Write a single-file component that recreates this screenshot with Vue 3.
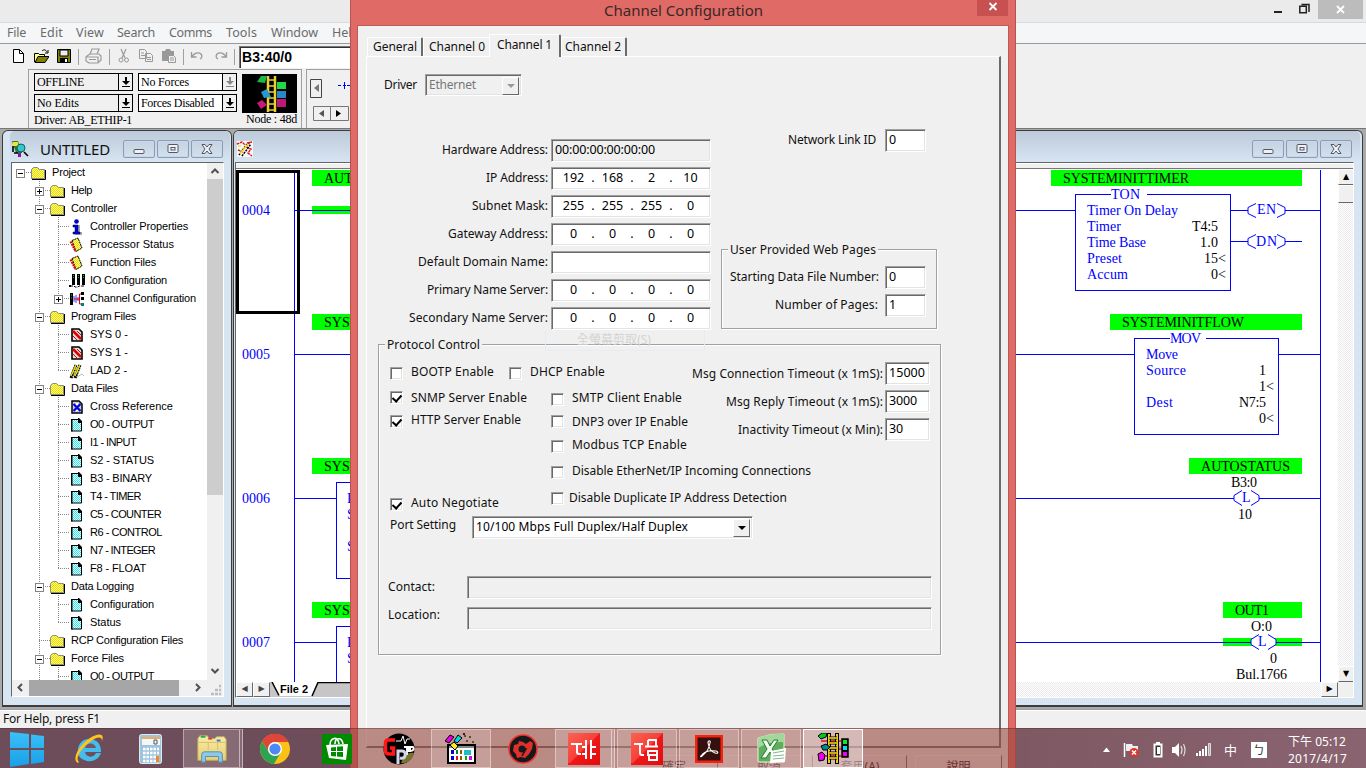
<script setup>
// Spreads a label over a given width through letter-spacing.
const vFit = {
  mounted(el, { value }) {
    const range = document.createRange()
    range.selectNodeContents(el)
    const width = range.getBoundingClientRect().width
    const count = [...el.textContent.trim()].length
    if (width > 0 && value) el.style.letterSpacing = ((value - width) / count).toFixed(3) + 'px'
  },
}

const menus = [
  ['File', 19, 33], ['Edit', 23, 36], ['View', 28, 41], ['Search', 38, 52],
  ['Comms', 43, 57], ['Tools', 31, 45], ['Window', 47, 61], ['Help', 27, 30],
]

const combos = [
  ['OFFLINE', 47, 'grey'], ['No Forces', 48, 'dim'], ['No Edits', 42, 'grey'], ['Forces Disabled', 73, ''],
]

const tree = [
  { d: 0, e: '-', i: 'folder-root', t: 'Project', w: 33 },
  { d: 1, e: '+', i: 'folder', t: 'Help', w: 21 },
  { d: 1, e: '-', i: 'folder', t: 'Controller', w: 46 },
  { d: 2, i: 'info', t: 'Controller Properties', w: 98 },
  { d: 2, i: 'book', t: 'Processor Status', w: 84 },
  { d: 2, i: 'book', t: 'Function Files', w: 66 },
  { d: 2, i: 'io', t: 'IO Configuration', w: 77 },
  { d: 2, e: '+', i: 'channel', t: 'Channel Configuration', w: 106, last: true },
  { d: 1, e: '-', i: 'folder', t: 'Program Files', w: 65 },
  { d: 2, i: 'sys', t: 'SYS 0 -', w: 38 },
  { d: 2, i: 'sys', t: 'SYS 1 -', w: 38 },
  { d: 2, i: 'lad', t: 'LAD 2 -', w: 37, last: true },
  { d: 1, e: '-', i: 'folder', t: 'Data Files', w: 47 },
  { d: 2, i: 'cross', t: 'Cross Reference', w: 83 },
  { d: 2, i: 'page', t: 'O0 - OUTPUT', w: 64 },
  { d: 2, i: 'page', t: 'I1 - INPUT', w: 46 },
  { d: 2, i: 'page', t: 'S2 - STATUS', w: 64 },
  { d: 2, i: 'page', t: 'B3 - BINARY', w: 62 },
  { d: 2, i: 'page', t: 'T4 - TIMER', w: 51 },
  { d: 2, i: 'page', t: 'C5 - COUNTER', w: 71 },
  { d: 2, i: 'page', t: 'R6 - CONTROL', w: 72 },
  { d: 2, i: 'page', t: 'N7 - INTEGER', w: 65 },
  { d: 2, i: 'page', t: 'F8 - FLOAT', w: 56, last: true },
  { d: 1, e: '-', i: 'folder', t: 'Data Logging', w: 63 },
  { d: 2, i: 'page', t: 'Configuration', w: 64 },
  { d: 2, i: 'page', t: 'Status', w: 31, last: true },
  { d: 1, i: 'folder', t: 'RCP Configuration Files', w: 112 },
  { d: 1, e: '-', i: 'folder', t: 'Force Files', w: 53 },
  { d: 2, i: 'page', t: 'O0 - OUTPUT', w: 64 },
]

const addresses = [
  { t: 'Hardware Address:', w: 106, v: '00:00:00:00:00:00', vw: 100, off: true },
  { t: 'IP Address:', w: 62, ip: [192, 168, 2, 10] },
  { t: 'Subnet Mask:', w: 76, ip: [255, 255, 255, 0] },
  { t: 'Gateway Address:', w: 100, ip: [0, 0, 0, 0] },
  { t: 'Default Domain Name:', w: 130, v: '' },
  { t: 'Primary Name Server:', w: 121, ip: [0, 0, 0, 0] },
  { t: 'Secondary Name Server:', w: 139, ip: [0, 0, 0, 0] },
]

const timeouts = [
  ['Msg Connection Timeout (x 1mS):', 191, '15000', 36],
  ['Msg Reply Timeout (x 1mS):', 157, '3000', 28],
  ['Inactivity Timeout (x Min):', 145, '30', 14],
]

const tasks = [
  ['windows', ''], ['ie', ''], ['calc', ''], ['explorer', 'open stack'], ['chrome', ''], ['store', ''],
  ['gp', ''], ['palette', 'open'], ['gear', ''], ['plc1', 'open stack'], ['plc2', 'open'],
  ['acrobat', 'open'], ['excel', 'open'], ['ladder', 'open focus'],
]
const windowGlyphs = ['min', 'max', 'x']
</script>

<template>
  <div class="screen">
    <svg class="sheet" width="0" height="0">
      <defs>
        <pattern id="yel" width="2" height="2" patternUnits="userSpaceOnUse"><rect width="2" height="2" fill="#ffff66" /><rect width="1" height="1" fill="#e6d820" /><rect x="1" y="1" width="1" height="1" fill="#e6d820" /></pattern>
        <pattern id="cya" width="2" height="2" patternUnits="userSpaceOnUse"><rect width="2" height="2" fill="#fff" /><rect width="1" height="1" fill="#20f0f4" /><rect x="1" y="1" width="1" height="1" fill="#20f0f4" /></pattern>
        <linearGradient id="winblue" x1="0" y1="0" x2="0" y2="1"><stop offset="0" stop-color="#3cc0f8" /><stop offset="1" stop-color="#18a0e8" /></linearGradient>
        <linearGradient id="redg" x1="0" y1="0" x2="1" y2="1"><stop offset="0" stop-color="#f85848" /><stop offset=".5" stop-color="#f01818" /><stop offset="1" stop-color="#e00c10" /></linearGradient>
        <linearGradient id="fold" x1="0" y1="0" x2="0" y2="1"><stop offset="0" stop-color="#f8eca8" /><stop offset="1" stop-color="#e8cf70" /></linearGradient>
      </defs>
      <symbol id="folder" viewBox="0 0 16 14"><path d="M.5 12.500v-9l2-2h4l2 2h5v9z" fill="url(#yel)" stroke="#909070" /><path d="M1 13.500h13.500V4" fill="none" stroke="#000" /></symbol>
      <symbol id="folder-root" viewBox="0 0 16 14"><path d="M.5 12.500v-9l2-2h4l2 2h5v9z" fill="url(#yel)" stroke="#888" /><path d="M1 13.500h13.500V4" fill="none" stroke="#000" /></symbol>
      <symbol id="info" viewBox="0 0 16 16"><path d="M6 6h4v7h2v3H5v-2h2V9H5z" fill="#aaa" transform="translate(1 0)" /><circle cx="7.500" cy="2.500" r="2.300" fill="#0000c8" /><path d="M4 6h5v7h2v2H4v-2h2V8H4z" fill="#0000d8" stroke="#000050" stroke-width=".5" /></symbol>
      <symbol id="book" viewBox="0 0 16 16"><path d="M3 3.500l6-2.500 4 10-6 3.500z" fill="url(#yel)" stroke="#000" stroke-dasharray="2 .6" /><path d="M1.500 4.500l5 10" stroke="#e00000" stroke-width="2" stroke-dasharray="2 .7" /></symbol>
      <symbol id="io" viewBox="0 0 16 16"><path d="M3 1h3v11H3zM8 1h3v11H8zM13 1h3v11h-3zM0 12h2v2H0z" fill="#000" /><path d="M4.500 2v3M9.500 2v3M14.500 2v3" stroke="#00d000" stroke-dasharray="1 1" /><path d="M1 13h4l1 1h3l1-1h5" fill="none" stroke="#000" stroke-dasharray="3 1" /></symbol>
      <symbol id="channel" viewBox="0 0 16 16"><rect x="1" y="2" width="3" height="12" fill="#000" /><path d="M2 4h1M2 7h1" stroke="#0e0" /><path d="M5 5v6M7 4v8M9 6v4" stroke="#00f" stroke-width=".8" /><path d="M5 8h6M10.500 3h2M10.500 3v10M10.500 13h2" stroke="#e00000" fill="none" /><rect x="12" y="1" width="3" height="3" /><rect x="12" y="6" width="3" height="3" /><rect x="12" y="12" width="3" height="3" fill="#008080" /></symbol>
      <symbol id="sys" viewBox="0 0 16 16"><path d="M3 2h7l3 3v9H3z" fill="#ddd" stroke="#000" stroke-width="1.600" /><path d="M4 4l8 8" stroke="#e00000" stroke-width="2.500" /><path d="M4 9l4 4M8 4l4 4" stroke="#e00000" /></symbol>
      <symbol id="lad" viewBox="0 0 16 16"><path d="M2 15L7 2M6 15L11 2" stroke="#000" stroke-width="3" stroke-dasharray="2 .4" /><path d="M2 13L7 2M6 13L11 2M4 9h6M5 6h5" stroke="#f0e000" stroke-width="1.200" /><path d="M8 14l5-3 2 2" stroke="#bbb" fill="none" /></symbol>
      <symbol id="cross" viewBox="0 0 16 16"><path d="M3 2h7l3 3v9H3z" fill="#ccd" stroke="#000" stroke-width="1.500" /><path d="M4.500 5l7 7M11.500 5l-7 7" stroke="#0000e0" stroke-width="2.200" /><path d="M7 4h2v2H7zM7 11h2v1H7z" fill="#fff" /></symbol>
      <symbol id="page" viewBox="0 0 16 16"><path d="M2.500 2.500h7l3 3v8.500h-10z" fill="url(#cya)" stroke="#000" /><path d="M2 2h1.500v12.500H2zM9 1h1l3 3v2H9z" /></symbol>

      <symbol id="t-new" viewBox="0 0 16 16"><path d="M3.500 1.500h6l4 4v9h-10z" fill="#fff" stroke="#000" /><path d="M9.500 1.500v4h4" fill="none" stroke="#000" /></symbol>
      <symbol id="t-open" viewBox="0 0 16 16"><path d="M1.500 14V5.500h4l1 1h5V9" fill="#ff8" stroke="#000" /><path d="M2 14.500l3-6h11l-4 6z" fill="#808000" stroke="#000" /><path d="M9 3c2-2 4-1 5 1m1-2v3h-3" fill="none" stroke="#000" /></symbol>
      <symbol id="t-save" viewBox="0 0 16 16"><path d="M1.500 1.500h13v13h-13z" fill="#808000" stroke="#000" /><path d="M4 2h8v6H4z" fill="#ececec" stroke="#000" /><path d="M4 10h8v5H4z" /><path d="M9 11h2v3H9z" fill="#fff" /></symbol>
      <symbol id="t-print" viewBox="0 0 18 16"><path d="M5 6l2-5h7l-2 5M2 8l3-2h9l2 2v4l-3 3H4l-3-2V9zM2 9h11v5M4 11.500h7" fill="none" stroke="#999" stroke-width="1.200" /></symbol>
      <symbol id="t-cut" viewBox="0 0 12 16"><path d="M3 1l4 9M8 1L4 10" stroke="#999" stroke-width="1.200" /><circle cx="3" cy="12" r="2" fill="none" stroke="#999" /><circle cx="8.500" cy="12" r="2" fill="none" stroke="#999" /></symbol>
      <symbol id="t-copy" viewBox="0 0 16 16"><path d="M1.500 1.500h5l2 2v7h-7zM7.500 5.500h5l2 2v6h-7zM3 5h3M3 7.500h4M9 9.500h4M9 11.500h4" fill="none" stroke="#999" /></symbol>
      <symbol id="t-paste" viewBox="0 0 16 16"><path d="M1 3h3l1-2h4l1 2h3v10H1z" fill="#999" /><path d="M7.500 7.500h5l2 2v5h-7z" fill="#eee" stroke="#999" /><path d="M9 10h4M9 12h4" stroke="#999" /></symbol>
      <symbol id="t-undo" viewBox="0 0 14 12"><path d="M1.500 2v5h5M2 6.500c2-3 6-5 9-2.500 1.500 2 1 4-1 5" fill="none" stroke="#999" stroke-width="1.300" /></symbol>

      <symbol id="ladder" viewBox="0 0 32 32"><path d="M4 8h20M8 16h18M7 23h17" stroke="#e81010" stroke-width="1.500" /><path d="M12 0v31M20 0v31" stroke="#000" stroke-width="4" /><path d="M12 1v29M20 1v29" stroke="#ffe818" stroke-width="1.800" /><path d="M12 5h8M12 10h8M12 15h8M12 20h8M12 25h8" stroke="#000" stroke-width="3" /><path d="M12 5h8M12 10h8M12 15h8M12 20h8M12 25h8" stroke="#ffe818" stroke-width="1.400" /><path d="M1 3l4-3h5l-1 4-5 2z" fill="#00c820" stroke="#000" /><path d="M4 13l5-2 4 3-3 3H6z" fill="#008890" stroke="#000" /><path d="M1 21l4-2 3 3-1 5-5 1z" fill="#f000f0" stroke="#000" /><path d="M25 6h6v18h-6z" stroke="#000" stroke-width="1.500" /><path d="M26 7h4v4h-4z" fill="#00f020" /><path d="M26 13h4v4h-4z" fill="#00e0f0" /><path d="M26 19h4v4h-4z" fill="#f000f0" /></symbol>
      <symbol id="app" viewBox="0 0 15 16"><path d="M3 4h9M2 9h11M3 13h9" stroke="#e00000" stroke-width="1.500" /><path d="M5.500 0v16M10.500 0v16" stroke="#000" stroke-width="3" stroke-dasharray="1.500 .6" /><path d="M5.500 1v14M10.500 1v14M6 4h4M6 8h4M6 12h4" stroke="#ffe800" stroke-width="1.400" /><path d="M0 3h3v3H0zM12 3h3v3h-3z" fill="#00f020" /><path d="M2 7h3v4H2zM12 8h3v3h-3z" fill="#0020ff" /><path d="M0 12h3v3H0zM12 12h3v3h-3z" fill="#800080" /></symbol>
      <symbol id="windows" viewBox="0 0 34 36"><path d="M0 1l19 2v14H0zM21 3.500L34 5v12H21zM0 19h19v14L0 36zM21 19h13v12l-13 2z" fill="url(#winblue)" /></symbol>
      <symbol id="ie" viewBox="0 0 32 32"><path d="M28 20c-2 6-8 9-14 8C6 26 4 21 5 16 6 9 12 5 19 6c7 2 9 7 9 13H12c1 6 9 6 11 1z" fill="#45bdec" /><path d="M12 15c1-6 10-6 11 0z" fill="#785560" /><path d="M5 30C-2 27 6 12 17 5 25 0 32 0 29 8c0-6-7-3-12 1C7 16 2 26 6 29z" fill="#ffc51d" /></symbol>
      <symbol id="calc" viewBox="0 0 32 32"><rect x="4.500" y="1.500" width="22" height="29" rx="2" fill="#9fc5dd" stroke="#dceaf2" /><rect x="7" y="4" width="18" height="8" fill="#f2f7fa" /><path d="M7 4h18v2H7z" fill="#f0aa62" /><path d="M19 7h3v4h-3z" fill="none" stroke="#556" /><path d="M8 16h16M8 20h16M8 24h16M8 28h16" stroke="#fff" stroke-width="2.500" stroke-dasharray="2.500 1" /><path d="M21 23h3v6h-3z" fill="#f0872b" /></symbol>
      <symbol id="explorer" viewBox="0 0 34 32"><path d="M2 5l2-3h8l2 3h6l2-2h8l2 3v22H2z" fill="url(#fold)" stroke="#c8ad58" /><path d="M5 2h5v2H5z" fill="#18b050" /><path d="M13 4h4v2h-4z" fill="#e04030" /><path d="M22 6h4v2h-4z" fill="#2878d8" /><path d="M3 9h28M13 9v8M23 9v8" stroke="#d5bd6c" /><path d="M6 30V22q0-3 3-3h16q3 0 3 3v8h-4v-6H10v6z" fill="#8dc8e8" stroke="#508eb4" /></symbol>
      <symbol id="chrome" viewBox="0 0 32 32"><circle cx="16" cy="16" r="15" fill="#fbc116" /><path d="M3 8.500A15 15 0 0 1 29.500 9H16a7 7 0 0 0-6.600 9z" fill="#e0453a" /><path d="M3 8.500A15 15 0 0 0 15 31l7-12a7 7 0 0 1-12.600-1z" fill="#30a352" /><circle cx="16" cy="16" r="7" fill="#fff" /><circle cx="16" cy="16" r="5.600" fill="#4b8af4" /></symbol>
      <symbol id="store" viewBox="0 0 32 32"><path d="M1 1h30v30H1z" fill="#008a00" /><path d="M5 12l22-1-2 16-17-2z" fill="#fff" /><path d="M9 12c0-7 8-10 9-1M14 11c0-7 7-7 8 0" fill="none" stroke="#fff" stroke-width="1.600" /><path d="M10 14.500l5-.5v4h-5zM16 13.800l6-.5V18h-6zM10 19h5v4.500l-5-.5zM16 19h6v5l-6-.5z" fill="#008a00" /></symbol>
      <symbol id="gp" viewBox="0 0 32 32"><circle cx="16" cy="16" r="15.500" /><path d="M18 30c3-9 8-11 13-10-1 6-6 11-13 10z" fill="#77752c" /><path d="M13 8h5l2-5 2 8 2-5h3" stroke="#fff" fill="none" /><path d="M21 14h9q2 3-2 4h-4v4M23 16h5" fill="none" stroke="#fff" stroke-width="1.800" /><path d="M12 7H5Q2.500 7 2.500 10v8q0 3 4 3h4v-6H7" fill="none" stroke="#ff1818" stroke-width="3.500" /><path d="M15 31V18h4q4 0 3 5-1 3-5 2" fill="none" stroke="#d4d4e8" stroke-width="3" /></symbol>
      <symbol id="palette" viewBox="0 0 32 32"><path d="M3 12h27v18H3z" fill="#fff" stroke="#000" stroke-width="2" /><path d="M4 13h25v2H4z" fill="#888" /><path d="M6 17h3v4H6zM6 23h3v4H6z" fill="#0000d8" /><path d="M11 17h2v4h-2z" fill="#008040" /><path d="M15 17h2v4h-2zM15 23h2v4h-2z" fill="#806000" /><path d="M11 23h2v4h-2z" fill="#e01010" /><path d="M19 17h7v5h-7z" fill="#18c0c8" /><path d="M20 23h2v4h-2z" fill="#00b000" /><path d="M24 23h3v4h-3z" fill="#e000e0" /><path d="M0 8l5-6 4 2-5 6z" fill="#e800e8" stroke="#000" /><path d="M9 8l4-6 4 3-5 5z" fill="#00d8e0" stroke="#000" /><path d="M5 12l4-3 4 4-3 4z" fill="#ffe828" stroke="#000" /><path d="M19 3h2M24 4h2M21 8h2M27 9h2M18 1h2" stroke="#222" stroke-width="2" /><path d="M19.500 3h1M24.500 4h1M21.500 8h1M27.500 9h1" stroke="#ffe828" /></symbol>
      <symbol id="gear" viewBox="0 0 32 32"><circle cx="16" cy="16" r="14" fill="#15191b" stroke="#f0302a" stroke-width="1.600" /><path d="M7 12l4-1 1-3 4 1 3 2 4-3 3 2-1 6-3 5-4 4-4-1-4 1-1-4-3-3z" fill="#e0302c" /><circle cx="15" cy="16" r="3.500" fill="#15191b" /><path d="M15 16h4l-4 7" stroke="#15191b" stroke-width="1.500" fill="none" /></symbol>
      <symbol id="plc1" viewBox="0 0 32 32"><path d="M0 0h32v32H0z" fill="url(#redg)" /><path d="M0 0h32L2 30H0z" fill="#ff7060" opacity=".45" /><path d="M3 11h11M9 11v8q0 2 2 2h2M18 7v19M23 7v19M14 14h4M14 21h4M23 14h5M23 21h5" fill="none" stroke="#fff" stroke-width="2" /></symbol>
      <symbol id="plc2" viewBox="0 0 32 32"><path d="M0 0h32v32H0z" fill="url(#redg)" /><path d="M0 0h32L2 30H0z" fill="#ff7060" opacity=".45" /><path d="M3 11h9M9 11v9q0 2 2 2h2M17 7h8v6M17 7v6M14 13.500h13M17 18h9v4h-9zM18 22v5h8v-5" fill="none" stroke="#fff" stroke-width="1.900" /></symbol>
      <symbol id="acrobat" viewBox="0 0 32 32"><path d="M2 2h28v28H2z" fill="#fa2010" /><path d="M4.500 4.500h23v23h-23z" fill="#35100e" /><path d="M8 23c2-3 7-6 15-5 3 1 2 3-1 2-4-1-6-5-7-10 0-3 3-3 2 0-1 5-4 10-7 12-2 2-3 2-2 1z" fill="none" stroke="#fff" stroke-width="1.100" /></symbol>
      <symbol id="excel" viewBox="0 0 32 32"><path d="M3 5q12-5 26-4v28H3z" fill="#5fae5a" stroke="#e4f4e0" /><path d="M3 5q12-5 26-4v8Q14 8 3 15z" fill="#a4d79a" /><path d="M7 7h5l3 6 4-6h4l-6 9 6 9h-5l-3-6-4 6H6l6-9z" fill="#f2fcec" stroke="#227a35" /><path d="M16 18l15-3-1 14-15 1z" fill="#fff" /><path d="M18 20l11-2M18 23l11-1M18 26l11-1" stroke="#85b890" /></symbol>
    </svg>

    <div class="desktop">
      <header class="title">
        <svg class="app-icon"><use href="#app" /></svg>
        <span class="spacer" />
        <svg class="caption" width="98" height="19"><path d="M9 12h8" stroke="#222" stroke-width="2" /><path d="M34.800 6.300h6.500v6.500h-6.500zM36.500 4.500h7.500v7.500" fill="none" stroke="#222" stroke-width="1.500" /><path d="M53 0h45v19H53z" fill="#bcbcbc" /><path d="M72 6l7 7M79 6l-7 7" stroke="#fff" stroke-width="1.800" /></svg>
      </header>
      <nav class="menubar">
        <span v-for="m in menus" :key="m[0]" class="menu" :style="{ width: m[2] + 'px' }"><span v-fit="m[1]">{{ m[0] }}</span></span>
      </nav>
      <div class="toolbar">
        <svg width="16" height="16"><use href="#t-new" /></svg>
        <svg width="16" height="16"><use href="#t-open" /></svg>
        <svg width="16" height="16"><use href="#t-save" /></svg>
        <i class="sep" />
        <svg width="18" height="16"><use href="#t-print" /></svg>
        <i class="sep" />
        <svg class="cut" width="12" height="16"><use href="#t-cut" /></svg>
        <svg width="16" height="16"><use href="#t-copy" /></svg>
        <svg width="16" height="16"><use href="#t-paste" /></svg>
        <i class="sep" />
        <svg class="undo" width="14" height="12"><use href="#t-undo" /></svg>
        <svg class="redo" width="14" height="12"><use href="#t-undo" /></svg>
        <i class="sep" />
        <b class="address"><span v-fit="50">B3:40/0</span></b>
      </div>
      <div class="panels">
        <section class="online">
          <div class="combos">
            <div v-for="c in combos" :key="c[0]" class="combo" :class="c[2]">
              <span v-fit="c[1]">{{ c[0] }}</span>
              <svg width="14" height="16"><path d="M6 3h2v4h3L7 11 3 7h3zM3 12h8v1H3z" /></svg>
            </div>
            <span class="driver"><span v-fit="98">Driver: AB_ETHIP-1</span></span>
          </div>
          <div class="node">
            <svg width="55" height="39" viewBox="0 0 55 39"><path d="M0 0h55v39H0z" /><path d="M26 2v36M33 2v36" stroke="#e8d030" stroke-width="2.500" /><path d="M26 6h7M26 12h7M26 18h7M26 24h7M26 30h7M26 36h7" stroke="#e8d030" stroke-width="1.500" /><path d="M15 8l4-6h6l-2 7z" fill="#18b848" /><path d="M19 18l6-3 4 8-7 1z" fill="#2898d0" /><path d="M15 29l5-3 5 5-6 4z" fill="#c81878" /><path d="M35 8h9v7h-9z" fill="#20d848" /><path d="M35 17h9v7h-9z" fill="#2888c8" /><path d="M35 25h9v8h-9z" fill="#c01878" /></svg>
            <span v-fit="51">Node : 48d</span>
          </div>
        </section>
        <section class="instr">
          <svg width="44" height="58"><path d="M2.500 10.500h11v18h-11z" fill="#f0f0f0" stroke="#444" /><path d="M11 15v8l-5-4z" fill="#777" /><path d="M30 16.500h4M35 16.500h9M36.500 13v7" stroke="#00f" stroke-dasharray="3 1" /><path d="M5.500 37.500h35v14h-35zM22.500 38v14" fill="#f0f0f0" stroke="#777" /><path d="M16 41v7l-5-3.500z" fill="#555" /><path d="M28 41v7l5-3.500z" /></svg>
        </section>
      </div>

      <div class="mdi">
        <section class="child tree-win">
          <header>
            <svg width="18" height="18" viewBox="0 0 18 18"><path d="M1 1h6l1 3h3v9H5z" fill="#228038" /><path d="M2 2h5v4H2z" fill="#ffe020" /><circle cx="10" cy="8" r="4" fill="#30c8c8" stroke="#146060" /><path d="M2 6v6M3 13h4M13 12l4 4" stroke="#000" stroke-width="1.600" /><path d="M7 13h3v4H7z" fill="#9010a0" /></svg>
            <span class="doc-name"><span v-fit="70">UNTITLED</span></span>
            <span class="spacer" />
            <span v-for="g in windowGlyphs" :key="g" class="winbtn">
              <svg width="14" height="12"><rect v-if="g === 'min'" x="2" y="6.500" width="10" height="4" rx="1" class="wg" /><template v-else-if="g === 'max'"><rect x="2" y="1.500" width="10" height="8" rx="1" class="wg" /><rect x="5" y="4.500" width="4" height="2.500" class="wg" /></template><path v-else d="M2 1.500h3l2 2.500 2-2.500h3L9 6l3 4.500H9L7 8l-2 2.500H2L5 6z" class="wg" /></svg>
            </span>
          </header>
          <div class="tree-client">
            <div class="tree-main">
              <ul class="tree">
                <li v-for="(n, k) in tree" :key="k" :class="['d' + n.d, { last: n.last }]">
                  <i v-if="n.d === 2" class="trunk" />
                  <i class="branch"><i v-if="n.e" class="exp" :class="{ plus: n.e === '+' }" /></i>
                  <svg width="16" height="16"><use :href="'#' + n.i" /></svg>
                  <span v-fit="n.w">{{ n.t }}</span>
                </li>
              </ul>
              <div class="vbar">
                <svg width="16" height="16"><path d="M4.500 10L8 6.500 11.500 10" class="chev" /></svg>
                <i />
                <span class="spacer" />
                <svg width="16" height="16"><path d="M4.500 5L8 8.500 11.500 5" class="chev" /></svg>
              </div>
            </div>
            <div class="hbar">
              <svg width="17" height="16"><path d="M10 4L6.500 7.500 10 11" class="chev" /></svg>
              <i />
              <span class="spacer" />
              <svg width="16" height="16"><path d="M6 4l3.500 3.500L6 11" class="chev" /></svg>
              <svg width="17" height="16"><path d="M13 6h2M9 10h6M5 14h10" stroke="#bbb" stroke-width="2.500" stroke-dasharray="3 1" /></svg>
            </div>
          </div>
        </section>

        <section class="child ladder-win">
          <header>
            <svg width="18" height="18" viewBox="0 0 18 18"><path d="M1 1h16v16H1z" fill="#fff" opacity=".8" /><path d="M1 4l5-2 3 3M11 3l5-1M14 2l-4 5 5 2-3 4 4 3M2 10l5 2" fill="none" stroke="#e01010" stroke-width="1.400" stroke-dasharray="2.500 .8" /><path d="M3 15l8-11M6 16l9-12" stroke="#000" stroke-width="1.500" stroke-dasharray="2 1" /><path d="M4 14l8-10M2 6h3" stroke="#ffe020" stroke-width="1.500" /></svg>
            <span class="spacer" />
            <span v-for="g in windowGlyphs" :key="g" class="winbtn">
              <svg width="14" height="12"><rect v-if="g === 'min'" x="2" y="6.500" width="10" height="4" rx="1" class="wg" /><template v-else-if="g === 'max'"><rect x="2" y="1.500" width="10" height="8" rx="1" class="wg" /><rect x="5" y="4.500" width="4" height="2.500" class="wg" /></template><path v-else d="M2 1.500h3l2 2.500 2-2.500h3L9 6l3 4.500H9L7 8l-2 2.500H2L5 6z" class="wg" /></svg>
            </span>
          </header>
          <div class="ladder-client">
            <div class="splitter" />
            <div class="rungs">
              <svg class="canvas" width="1102" height="513" viewBox="236 169 1102 513">
                <g fill="#00ff00"><path d="M312 170h60v16h-60zM312 206h60v8h-60zM312 314h60v16h-60zM312 458h60v16h-60zM312 602h60v16h-60zM1051 170h251v16h-251zM1110 314h192v16h-192zM1189 458h113v16h-113zM1223 602h79v16h-79zM1223 638h79v8h-79z" /></g>
                <path class="wire" d="M294.500 170v512M1320.500 170v512M294 210.500h781M294 354.500h840M294 498.500h42M294 642.500h42M1000 498.500h234M1000 642.500h251M1231 210.500h17M1285 210.500h35M1231 241.500h17M1285 241.500h17M1279 354.500h41M1259 498.500h61M1276 642.500h44" />
                <path class="wire" d="M1111 194.500h-35.500v96h155v-96H1147M1170 338.500h-35.500v96h144v-96H1206M360 482.500h-23.500v95.500h24M360 626.500h-23.500v60" />
                <path d="M1259 634.500l-8 5v5l8 5h9l8-5v-5l-8-5z" fill="#fff" />
                <g class="coil"><path d="M1256 203.500l-8 4v6l8 4M1277 203.500l8 4v6l-8 4M1256 234.500l-8 4v6l8 4M1277 234.500l8 4v6l-8 4" /><path d="M1242 490.500l-8 5v5l8 5M1251 490.500l8 5v5l-8 5" /><path d="M1259 634.500l-8 5v5l8 5M1268 634.500l8 5v5l-8 5" /></g>
                <rect x="237.500" y="171.500" width="61" height="141" fill="none" stroke="#000" stroke-width="3" />
                <g class="blue">
                  <text x="242" y="215" textLength="28">0004</text><text x="242" y="359" textLength="28">0005</text><text x="242" y="503" textLength="28">0006</text><text x="242" y="647" textLength="28">0007</text>
                  <text x="347" y="503">E</text><text x="347" y="519">S</text><text x="347" y="551">S</text><text x="347" y="647">E</text><text x="347" y="663">S</text>
                  <text x="1111" y="199" textLength="29">TON</text><text x="1087" y="215" textLength="91">Timer On Delay</text><text x="1087" y="231" textLength="34">Timer</text><text x="1087" y="247" textLength="59">Time Base</text><text x="1087" y="263" textLength="35">Preset</text><text x="1087" y="279" textLength="41">Accum</text>
                  <text x="1257" y="214" textLength="19">EN</text><text x="1256" y="246" textLength="21">DN</text><text x="1242" y="502">L</text><text x="1258" y="646">L</text>
                  <text x="1170" y="343" textLength="31">MOV</text><text x="1146" y="359" textLength="32">Move</text><text x="1146" y="375" textLength="40">Source</text><text x="1146" y="407" textLength="27">Dest</text>
                </g>
                <g class="ink">
                  <text x="324" y="183">AUTO</text><text x="324" y="327">SYST</text><text x="324" y="471">SYST</text><text x="324" y="615">SYST</text>
                  <text x="1063" y="183" textLength="126">SYSTEMINITTIMER</text><text x="1122" y="327" textLength="122">SYSTEMINITFLOW</text><text x="1201" y="471" textLength="89">AUTOSTATUS</text><text x="1235" y="615" textLength="34">OUT1</text>
                  <text x="1192" y="231" textLength="26">T4:5</text><text x="1200" y="247" textLength="18">1.0</text><text x="1204" y="263" textLength="22">15&lt;</text><text x="1211" y="279" textLength="15">0&lt;</text>
                  <text x="1259" y="375">1</text><text x="1259" y="391" textLength="15">1&lt;</text><text x="1239" y="407" textLength="27">N7:5</text><text x="1259" y="423" textLength="15">0&lt;</text>
                  <text x="1231" y="487" textLength="26">B3:0</text><text x="1238" y="519" textLength="14">10</text><text x="1251" y="631" textLength="21">O:0</text><text x="1270" y="663">0</text><text x="1236" y="679" textLength="51">Bul.1766</text>
                </g>
              </svg>
              <div class="classic-v"><span class="cbtn">▲</span><span class="cbtn thumb" /><span class="spacer" /><span class="cbtn">▼</span></div>
            </div>
            <div class="sheetbar">
              <span class="cbtn side">◀</span><span class="cbtn side">▶</span>
              <svg width="80" height="15"><path d="M0 0h80v15H0z" fill="#c6c6c6" /><path d="M2 0l7 14h33l6-14z" fill="#fff" /><path d="M2 0l7 13.500M42 14l6-13.500h32" fill="none" stroke="#000" stroke-width="1.500" /><text x="10" y="11" textLength="28" class="sheet-name">File 2</text></svg>
              <span class="track" />
              <span class="cbtn side black">▶</span><span class="cornerbox" />
            </div>
          </div>
        </section>
      </div>
      <footer class="status"><span v-fit="97">For Help, press F1</span></footer>
      <div class="wallpaper" />
    </div>

    <section class="dialog">
      <header class="dlg-title"><span class="dlg-name"><span v-fit="159">Channel Configuration</span></span><span class="dlg-close"><svg width="31" height="16"><path d="M12.500 3l7 7M19.500 3l-7 7" stroke="#fff" stroke-width="1.800" /></svg></span></header>
      <div class="dlg-client">
        <div class="tabs">
          <span class="tab t0"><span v-fit="44">General</span></span><span class="tab t1"><span v-fit="56">Channel 0</span></span><span class="tab t2 on"><span v-fit="55">Channel 1</span></span><span class="tab t3"><span v-fit="56">Channel 2</span></span>
        </div>
        <div class="sheet-panel">
          <div class="driver-row"><span v-fit="33">Driver</span><div class="field off select"><span v-fit="47">Ethernet</span><i class="drop dis" /></div></div>
          <div class="mid">
            <div class="addr">
              <div v-for="a in addresses" :key="a.t" class="addr-row">
                <span v-fit="a.w">{{ a.t }}</span>
                <div class="field" :class="{ off: a.off }">
                  <div v-if="a.ip" class="ip"><template v-for="(o, k) in a.ip" :key="k"><b v-if="k">.</b><span>{{ o }}</span></template></div>
                  <span v-else v-fit="a.vw">{{ a.v }}</span>
                </div>
              </div>
            </div>
            <div class="right">
              <div class="net"><span v-fit="88">Network Link ID</span><div class="field small">0</div></div>
              <div class="group web">
                <span class="legend"><span v-fit="146">User Provided Web Pages</span></span>
                <div class="net"><span v-fit="149">Starting Data File Number:</span><div class="field small">0</div></div>
                <div class="net"><span v-fit="103">Number of Pages:</span><div class="field small">1</div></div>
              </div>
            </div>
          </div>
          <div class="group proto">
            <span class="legend"><span v-fit="93">Protocol Control</span></span>
            <span class="ghost"><span v-fit="74">全螢幕剪取(S)</span></span>
            <div class="proto-top">
              <div class="checks">
                <div class="pair first"><label class="ck"><i /><span v-fit="83">BOOTP Enable</span></label><label class="ck"><i /><span v-fit="75">DHCP Enable</span></label></div>
                <div class="pair">
                  <div class="col-a">
                    <label class="ck on"><i /><span v-fit="116">SNMP Server Enable</span></label>
                    <label class="ck on low"><i /><span v-fit="110">HTTP Server Enable</span></label>
                    <label class="ck on auto"><i /><span v-fit="88">Auto Negotiate</span></label>
                  </div>
                  <div class="col-b">
                    <label class="ck b1"><i /><span v-fit="110">SMTP Client Enable</span></label>
                    <label class="ck b2"><i /><span v-fit="116">DNP3 over IP Enable</span></label>
                    <label class="ck b3"><i /><span v-fit="115">Modbus TCP Enable</span></label>
                    <label class="ck b4"><i /><span v-fit="239">Disable EtherNet/IP Incoming Connections</span></label>
                    <label class="ck b5"><i /><span v-fit="218">Disable Duplicate IP Address Detection</span></label>
                  </div>
                </div>
              </div>
              <div class="timeouts">
                <div v-for="t in timeouts" :key="t[0]" class="time"><span v-fit="t[1]">{{ t[0] }}</span><div class="field"><span v-fit="t[3]">{{ t[2] }}</span></div></div>
              </div>
            </div>
            <div class="port"><span v-fit="66">Port Setting</span><div class="field select"><span v-fit="212">10/100 Mbps Full Duplex/Half Duplex</span><i class="drop" /></div></div>
            <div class="long contact"><span class="ll"><span v-fit="47">Contact:</span></span><div class="field off" /></div>
            <div class="long location"><span class="ll"><span v-fit="52">Location:</span></span><div class="field off" /></div>
          </div>
        </div>
        <div class="dlg-buttons"><span class="ok">確定</span><span class="cancel">取消</span><span class="apply">套用(A)</span><span class="help">說明</span></div>
      </div>
    </section>

    <footer class="taskbar">
      <div class="tasks">
        <span v-for="t in tasks" :key="t[0]" class="slot"><span class="task" :class="t[1]"><svg :class="t[0]" width="32" height="32"><use :href="'#' + t[0]" /></svg></span></span>
      </div>
      <span class="spacer" />
      <svg class="tray" width="180" height="40" viewBox="1095 728 180 40">
        <path d="M1103 751l3.500-4.500 3.500 4.500z" fill="#fff" />
        <path d="M1124.500 742v14" stroke="#fff" stroke-width="1.500" /><path d="M1126 743h6l1 2h5v7h-7l-1-2h-4z" fill="#eee" /><circle cx="1134" cy="751.500" r="4.500" fill="#e03428" /><path d="M1132 749.500l4 4M1136 749.500l-4 4" stroke="#fff" stroke-width="1.500" />
        <path d="M1154.500 743.500h7v12h-7z" fill="#333" stroke="#fff" stroke-width="2" /><path d="M1156 741h4v2h-4zM1157 746h3v7h-3z" fill="#fff" />
        <path d="M1172 746h3l4-4v14l-4-4h-3z" fill="#fff" /><path d="M1181 745q2 4 0 8M1183.500 743q3 6 0 12" fill="none" stroke="#ddd" stroke-width="1.200" />
        <path d="M1196 752h2v3h-2zM1199 750h2v5h-2zM1202 748h2v7h-2zM1205 745h2v10h-2z" fill="#fff" /><path d="M1208.500 742.500h2v12h-2z" fill="#aaa" stroke="#ddd" />
        <text x="1224" y="754" class="ime">中</text>
        <path d="M1251 741h16v16h-16z" fill="#fff" /><text x="1253" y="753.500" class="bopo">ㄅ</text>
      </svg>
      <div class="clock"><span><span v-fit="58">下午 05:12</span></span><span><span v-fit="59">2017/4/17</span></span></div>
    </footer>
  </div>
</template>

<style>
html, body { margin: 0; overflow: hidden; }
</style>

<style scoped>
* { box-sizing: border-box; }
.screen { position: relative; width: 1366px; height: 768px; overflow: hidden; font: 12px/16px "Noto Sans", "Noto Sans CJK TC", sans-serif; color: #111; white-space: nowrap; background: #f0f0f0; }
.sheet { position: absolute; }
.spacer { flex: 1; }
i { font-style: normal; }
svg { display: block; flex: none; }
.desktop { display: flex; flex-direction: column; height: 768px; }
.title { display: flex; height: 22px; background: #ebebeb; }
.app-icon { width: 15px; height: 16px; margin: 3px 0 0 3px; }
.caption { margin-right: 3px; }
.menubar { display: flex; height: 22px; background: #f5f6f7; border-top: 1px solid #d9dadc; border-bottom: 1px solid #999; padding-left: 7px; line-height: 20px; font-size: 12.5px; color: #6b6b6b; }
.menu { flex: none; }
.toolbar { display: flex; align-items: center; height: 23px; padding: 0 0 0 10px; margin-top: 1px; gap: 7px; flex: none; }
.toolbar svg { margin-top: -2px; }
.sep { width: 1px; height: 16px; background: #a0a0a0; margin: 0 -1px; flex: none; }
.toolbar .cut { margin-left: 2px; margin-right: 1px; }
.toolbar .redo { transform: scaleX(-1); margin-left: 3px; }
.address { flex: none; width: 130px; height: 22px; margin-left: -2px; background: #fff; border: 1px solid #777; border-right: 0; border-bottom: 0; box-shadow: inset 1px 1px #333; font: bold 14px/20px "Liberation Sans", sans-serif; padding-left: 2px; color: #000; }
.panels { display: flex; height: 60px; padding-left: 28px; gap: 4px; }
.online { display: flex; width: 274px; margin-top: 1px; border: 1px solid #a0a0a0; border-bottom: 0; padding: 3px 0 0 5px; font: 12px/16px "Liberation Serif", serif; color: #000; }
.combos { display: grid; grid-template-columns: 99px 99px; column-gap: 5px; row-gap: 3px; align-content: start; width: 208px; }
.combo { display: flex; justify-content: space-between; height: 18px; border: 1px solid #000; background: #fff; padding-left: 2px; }
.combo.grey { background: #f0f0f0; }
.combo svg { border-left: 1px solid #000; background: #f0f0f0; }
.combo.dim svg { fill: #888; }
.driver { grid-column: 1 / 3; line-height: 10px; }
.node { display: flex; flex-direction: column; line-height: 13px; align-items: flex-end; width: 55px; padding-top: 1px; }
.instr { border: 1px solid #a0a0a0; border-width: 1px 0 0 1px; margin-top: 1px; padding-left: 1px; width: 60px; }
.instr svg { margin-top: -1px; }

.mdi { display: flex; height: 581px; flex: none; border-top: 1px solid #777; padding: 1px 3px 4px 2px; background: #aaa; gap: 1px; }
.child { display: flex; flex-direction: column; height: 577px; border: 1px solid #3c3c3c; border-bottom-width: 2px; border-radius: 6px 6px 0 0; background: #d7e4f2; }
.tree-win { width: 230px; padding: 0 7px 8px 8px; }
.ladder-win { flex: 1; width: 0; padding: 0 8px 8px 1px; background: #d7e4f2; }
.child header { display: flex; align-items: flex-start; height: 31px; flex: none; background: linear-gradient(#bccad9, #d7e4f2); margin: 0 -6px 0 -1px; padding: 9px 7px 0 2px; border-radius: 5px 5px 0 0; }
.child.tree-win header { padding-left: 1px; }
.ladder-win header { padding-right: 8px; }
.doc-name { font-size: 15px; line-height: 20px; margin: -1px 0 0 11px; }
.winbtn { width: 32px; height: 18px; margin-left: 2px; border: 1px solid #8b9db6; border-radius: 2px; box-shadow: inset 0 0 0 1px #cbd7e5; display: flex; justify-content: center; align-items: center; }
.wg { fill: #eef2f7; stroke: #535666; stroke-width: 1; }
.tree-client { display: flex; flex-direction: column; flex: 1; border: 1px solid #666; border-right-color: #fff; border-bottom-color: #fff; background: #fff; height: 0; }
.tree-main { display: flex; height: 518px; overflow: hidden; }
.tree { list-style: none; margin: 0; padding: 0 0 0 4px; flex: 1; font: 11px/18px "Liberation Sans", sans-serif; color: #000; }
.tree li { display: flex; height: 18px; align-items: center; }
.tree li svg { margin: 1px 5px 0 0; }
.tree li span { line-height: 18px; }
.branch { display: flex; align-items: center; height: 18px; width: 15px; position: relative; top: 1px; background: repeating-linear-gradient(90deg, #888 0 1px, transparent 1px 2px) 4px 8px / 100% 1px no-repeat; }
.exp { width: 9px; height: 9px; border: 1px solid #848484; background: linear-gradient(#000, #000) 1px 3px / 5px 1px no-repeat, #fff; }
.exp.plus { background: linear-gradient(#000, #000) 1px 3px / 5px 1px no-repeat, linear-gradient(#000, #000) 3px 1px / 1px 5px no-repeat, #fff; }
.d1 { padding-left: 19px; background: repeating-linear-gradient(#888 0 1px, transparent 1px 2px) 23px 0 / 1px 18px no-repeat; }
.d1 svg, .d0 svg { width: 16px; height: 14px; }
.d2 { padding-left: 38px; background: repeating-linear-gradient(#888 0 1px, transparent 1px 2px) 23px 0 / 1px 18px no-repeat; }
.d2 .trunk { width: 1px; height: 18px; margin: 0 -1px 0 4px; background: repeating-linear-gradient(#888 0 1px, transparent 1px 2px); }
.d2.last .trunk { height: 10px; margin-bottom: 8px; }
.d2 .branch { margin-left: -4px; width: 15px; }
.vbar { display: flex; flex-direction: column; width: 16px; background: #f0f0f0; }
.vbar i { height: 316px; background: #cdcdcd; }
.hbar { display: flex; height: 16px; background: #f0f0f0; }
.hbar i { width: 150px; background: #a6a6a6; }
.chev { fill: none; stroke: #505050; stroke-width: 2; }
.ladder-client { display: flex; flex-direction: column; height: 536px; border: 1px solid #666; border-right-color: #fff; border-bottom-color: #fff; background: #f0f0f0; }
.splitter { height: 6px; flex: none; border-bottom: 1px solid #777; border-top: 1px solid #fff; }
.rungs { display: flex; height: 513px; flex: none; overflow: hidden; }
.canvas { background: #fff; }
.canvas text { font: 14px "Liberation Serif", serif; }
.blue text { fill: #0000ff; }
.ink text { fill: #000; }
.wire { fill: none; stroke: #0000ff; stroke-width: 1; shape-rendering: crispEdges; }
.coil path { fill: none; stroke: #0000ff; }
.classic-v { display: flex; flex-direction: column; width: 16px; background: repeating-conic-gradient(#ebebeb 0 25%, #fff 0 50%) 0 0 / 2px 2px; }
.cbtn { width: 16px; height: 16px; flex: none; background: #f0f0f0; border: 1px solid #fff; border-right-color: #696969; border-bottom-color: #696969; font: 8px/14px "DejaVu Sans", sans-serif; text-align: center; color: #000; }
.cbtn.thumb { height: 18px; }
.sheetbar { display: flex; height: 15px; }
.cbtn.side { width: 17px; height: 15px; line-height: 12px; color: #444; }
.cbtn.side.black { color: #000; }
.sheet-name { font: bold 11px "Liberation Sans", sans-serif; }
.track { flex: 1; background: repeating-conic-gradient(#ebebeb 0 25%, #fff 0 50%) 0 0 / 2px 2px; }
.cornerbox { width: 15px; background: #f0f0f0; }
.status { height: 19px; flex: none; border-top: 1px solid #a0a0a0; padding-left: 3px; line-height: 18px; font-size: 12px; box-shadow: inset 0 1px #fff; }
.wallpaper { height: 40px; flex: none; background: linear-gradient(90deg, #325784 0, #355a84 30%, #5b779e 75%, #7891bc); }

.dialog { position: absolute; left: 350px; top: 0; width: 666px; height: 768px; background: #e06a65; border: 1px solid #b4544f; border-width: 0 1px; padding: 0 7px; }
.dlg-title { display: flex; height: 25px; color: #3a2727; font-size: 15px; line-height: 20px; }
.dlg-name { width: 620px; padding-left: 246px; }
.dlg-close { background: #c75050; height: 16px; width: 31px; }
.dlg-client { height: 743px; background: #f0f0f0; border: 1px solid #bd5954; border-width: 1px 1px 0; margin: 0 -1px; padding: 8px 5px 0 9px; display: flex; flex-direction: column; }
.tabs { display: flex; align-items: flex-end; height: 22px; flex: none; position: relative; z-index: 1; }
.tab { height: 19px; border: 1px solid #fff; border-bottom: 0; border-right: 2px solid #6b6b6b; border-radius: 2px 2px 0 0; line-height: 18px; text-align: left; padding-left: 5px; }
.t0 { width: 56px; margin-left: 0; }
.t1 { width: 67px; margin-left: 0; border-right: 0; }
.t2 { width: 72px; height: 23px; margin-bottom: -1px; padding-left: 7px; margin-left: -1px; background: #f0f0f0; line-height: 20px; }
.t3 { width: 66px; padding-left: 3px; }
.sheet-panel { width: 635px; height: 692px; flex: none; border: 1px solid #fff; border-right: 2px solid #6b6b6b; border-bottom: 2px solid #6b6b6b; margin-left: -1px; padding: 16px 0 0 11px; display: flex; flex-direction: column; align-items: flex-start; }
.field { height: 23px; background: #fff; border: 1px solid #a0a0a0; border-right-color: #fff; border-bottom-color: #fff; box-shadow: inset 1px 1px #696969, inset -1px -1px #e3e3e3; line-height: 20px; padding-left: 3px; color: #000; }
.field.off { background: #f0f0f0; }
.driver-row { display: flex; align-items: center; padding-left: 6px; gap: 8px; height: 24px; margin-bottom: -2px; }
.driver-row > span { width: 33px; }
.select { display: flex; justify-content: space-between; padding: 0 2px 0 3px; }
.driver-row .select { width: 97px; height: 22px; color: #777; }
.drop { width: 17px; height: 18px; margin-top: 2px; background: #f0f0f0; border: 1px solid #fff; border-right-color: #696969; border-bottom-color: #696969; display: flex; justify-content: center; align-items: center; }
.drop::after { content: ""; border: 4px solid transparent; border-top-color: #000; border-bottom: 0; }
.drop.dis::after { border-top-color: #999; }
.mid { display: flex; gap: 10px; margin-top: 34px; height: 215px; }
.addr { width: 333px; padding-top: 10px; }
.addr-row { display: flex; height: 28px; justify-content: flex-end; gap: 3px; line-height: 22px; }
.addr-row .field { width: 160px; font-size: 12.5px; }
.ip { display: flex; padding-left: 6px; line-height: 20px; font-size: 12.5px; }
.ip span { width: 25px; text-align: center; }
.ip b { width: 14px; text-align: center; font-weight: 400; }
.right { width: 216px; }
.net { display: flex; justify-content: flex-end; align-items: center; gap: 9px; padding-right: 11px; height: 22px; }
.small { width: 41px; font-size: 12.500px; }
.group { border: 1px solid #a0a0a0; box-shadow: inset 1px 1px #fff, 1px 1px #fff; }
.legend { display: block; width: max-content; background: #f0f0f0; height: 16px; line-height: 16px; margin: -8px 0 0 6px; padding: 0 2px; }
.web { margin-top: 98px; height: 80px; }
.web .net { padding-right: 10px; margin-bottom: 6px; gap: 6px; }
.web .net:last-child { gap: 7px; }
.web .legend { margin-bottom: 8px; }
.proto { width: 563px; height: 311px; position: relative; display: flex; flex-direction: column; }
.ghost { position: absolute; left: 166px; top: -15px; width: 160px; height: 21px; border: 1px solid #e5ecf3; color: #d3d3d3; padding-left: 31px; line-height: 20px; border-top: 0; }
.proto-top { display: flex; justify-content: space-between; padding: 0 10px 0 11px; height: 163px; }
.checks { width: 290px; padding-top: 11px; }
.pair { display: flex; }
.ck { display: flex; align-items: flex-start; height: 16px; line-height: 16px; }
.ck i { width: 13px; height: 13px; flex: none; margin: 3px 8px 0 0; border: 1px solid #a0a0a0; border-right-color: #fff; border-bottom-color: #fff; background: #fff; box-shadow: inset 1px 1px #696969, inset -1px -1px #e3e3e3; display: flex; justify-content: center; }
.ck.on i::after { content: ""; width: 4px; height: 7px; border: solid #000; border-width: 0 2px 2px 0; transform: rotate(42deg); margin-top: 1px; }
.first { gap: 15px; height: 26px; }
.col-a { width: 161px; flex: none; }
.col-b { flex: none; }
.col-a .ck i { margin-top: 1px; }
.low { margin-top: 6px; }
.ck.low i { margin-top: 3px; }
.auto { margin-top: 67px; }
.ck.auto i { margin-top: 3px; }
.b2 { margin-top: 8px; }
.b3 { margin-top: 7px; }
.b4 { margin-top: 10px; }
.b5 { margin-top: 11px; }
.ck.b2 i { margin-top: 1px; }
.ck.b5 i { margin: 2px 5px 0 0; }
.timeouts { padding-top: 9px; }
.time { display: flex; height: 28px; justify-content: flex-end; gap: 2px; line-height: 24px; }
.time .field { width: 45px; font-size: 12.5px; }
.port { display: flex; padding-left: 11px; line-height: 18px; gap: 16px; }
.port > span { width: 66px; }
.port .select { width: 281px; line-height: 20px; }
.long { display: flex; padding-left: 9px; margin-bottom: 8px; line-height: 20px; }
.contact { margin-top: 37px; }
.ll { width: 79px; line-height: 17px; padding-top: 2px; }
.location .ll { padding-top: 0; margin-top: -1px; }
.long .field { width: 465px; }
.dlg-buttons { display: flex; margin: 7px 0 0 263px; }
.dlg-buttons span { height: 24px; text-align: center; border: 1px solid #fff; border-right-color: #696969; border-bottom: 0; line-height: 22px; }
.dlg-buttons .ok { width: 88px; }
.dlg-buttons .cancel { width: 88px; margin-left: 7px; }
.dlg-buttons .apply { width: 94px; margin-left: 0; }
.dlg-buttons .help { width: 87px; margin-left: 8px; }

.taskbar { position: absolute; left: 0; top: 728px; width: 1366px; height: 40px; display: flex; background: rgba(150, 70, 62, .6); border-top: 1px solid rgba(70, 30, 40, .35); }
.tasks { display: flex; margin-left: -4px; }
.slot { width: 62px; display: flex; justify-content: center; }
.task { width: 60px; height: 39px; display: flex; align-items: center; justify-content: center; }
.task.open { border: 1px solid rgba(255, 255, 255, .4); background: rgba(255, 255, 255, .17); }
.task.stack { border-right: 4px double rgba(255, 255, 255, .5); }
.task.focus { background: rgba(255, 255, 255, .4); border-color: #fff; }
.task svg.windows { width: 34px; height: 36px; }
.clock { width: 91px; display: flex; flex-direction: column; color: #fff; padding: 4px 0 0 13px; line-height: 17px; font-size: 12px; }
.ime { font: 13px "Noto Sans CJK TC", sans-serif; fill: #fff; }
.bopo { font: 12px "Noto Sans CJK TC", sans-serif; fill: #333; }
</style>
